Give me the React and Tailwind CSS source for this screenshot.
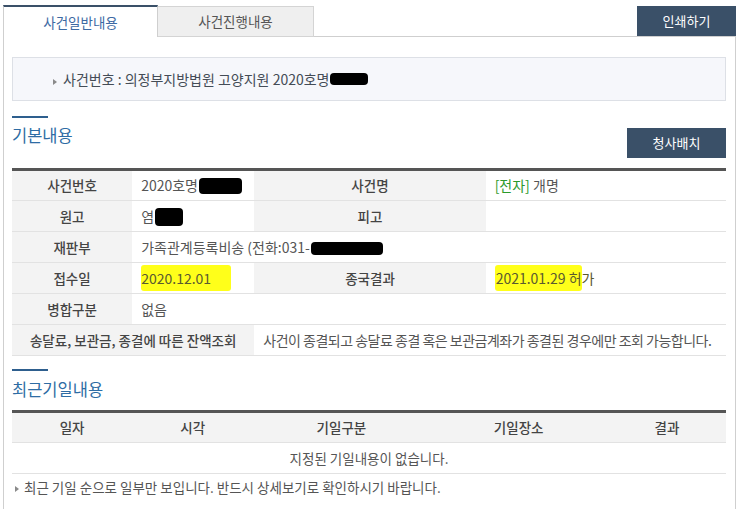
import React from "react";

const font = { fontFamily: '"Noto Sans CJK KR", "Noto Sans", sans-serif' };

function Blob({ className }) {
  return <span className={"inline-block bg-black rounded-[4px] align-middle " + className} />;
}

function Bullet({ className = "" }) {
  return (
    <svg width="4" height="6" viewBox="0 0 4 6" className={"inline-block " + className}>
      <path d="M0 0 L4 3 L0 6 Z" fill="#8a8a8a" />
    </svg>
  );
}

const th = "bg-[#f3f3f3] text-[#444] font-medium text-[13.5px] text-center border-b border-[#e2e2e2] h-[31px] p-0";
const td = "bg-white text-[#555] text-[14px] text-left pl-[9px] border-b border-[#e2e2e2] h-[31px] p-0";

export default function App() {
  return (
    <div className="w-[743px] h-[509px] bg-white overflow-hidden pl-[3px] pt-[5px] text-[13px]" style={font}>
      <div className="w-[733px]">
        {/* tabs row */}
        <div className="flex items-end h-[32px]">
          <div className="w-[155px] h-[32px] border-t-2 border-[#3a5068] border-l border-r border-l-[#cfcfcf] border-r-[#cfcfcf] bg-white flex items-center justify-center text-[#3d6aa3] text-[13.5px]">
            사건일반내용
          </div>
          <div className="w-[156px] h-[31px] bg-[#efefef] border-t border-r border-b border-[#d4d4d4] flex items-center justify-center text-[#555] text-[13.5px]">
            사건진행내용
          </div>
          <div className="flex-1 h-[32px] border-b border-[#cfcfcf] flex justify-end items-start">
            <div className="w-[99px] h-[30px] mt-[1px] bg-[#3a5068] text-white flex items-center justify-center text-[13px]">
              인쇄하기
            </div>
          </div>
        </div>

        {/* container */}
        <div className="border-l border-r border-[#cfcfcf] h-[480px] pl-[8px] pr-[9px] pt-[20px]">
          {/* case number box */}
          <div className="h-[44px] bg-[#f6f7fb] border border-[#dde0e6] flex items-center pl-[40px] text-[#444c56] text-[14px]">
            <Bullet className="mr-[6px] mt-[5px]" />
            <span>사건번호 : 의정부지방법원 고양지원 2020호명</span>
            <Blob className="w-[38px] h-[12px] ml-[1px]" />
          </div>

          {/* 기본내용 heading */}
          <div className="flex items-start justify-between mt-[15px] h-[42px]">
            <div>
              <div className="w-[36px] h-[2px] bg-[#2e5f8e]" />
              <div className="text-[16.5px] text-[#2e6ca4] mt-[5px] leading-[24px]">기본내용</div>
            </div>
            <div className="w-[99px] h-[30px] mt-[12px] bg-[#3a5068] text-white flex items-center justify-center text-[13px]">
              청사배치
            </div>
          </div>

          <table className="w-full border-collapse table-fixed mt-[10px] border-t-[3px] border-[#555]">
            <colgroup>
              <col style={{ width: 120 }} />
              <col style={{ width: 122 }} />
              <col style={{ width: 231 }} />
              <col style={{ width: 240 }} />
            </colgroup>
            <tbody>
              <tr>
                <th className={th}>사건번호</th>
                <td className={td}>
                  2020호명<Blob className="w-[43px] h-[16px] ml-[1px] mt-[-2px]" />
                </td>
                <th className={th}>사건명</th>
                <td className={td}>
                  <span className="text-[#2b9a2b]">[전자]</span> 개명
                </td>
              </tr>
              <tr>
                <th className={th}>원고</th>
                <td className={td}>
                  염<Blob className="w-[28px] h-[18px] ml-[1px] mt-[-2px]" />
                </td>
                <th className={th}>피고</th>
                <td className={td}></td>
              </tr>
              <tr>
                <th className={th}>재판부</th>
                <td className={td} colSpan={3}>
                  가족관계등록비송 (전화:031-<Blob className="w-[72px] h-[13px] ml-[1px]" />
                </td>
              </tr>
              <tr>
                <th className={th}>접수일</th>
                <td className={td}>
                  <span className="bg-[#ffff1a] rounded-[3px] pr-[20px] py-[3px] text-[#5a5a30]">2020.12.01</span>
                </td>
                <th className={th}>종국결과</th>
                <td className={td}>
                  <span className="bg-[#ffff1a] rounded-[3px] pl-[1px] py-[3px] text-[#5a5a30]">2021.01.29 허</span>
                  <span className="text-[#5a5a30]">가</span>
                </td>
              </tr>
              <tr>
                <th className={th}>병합구분</th>
                <td className={td} colSpan={3}>
                  없음
                </td>
              </tr>
              <tr>
                <th className={th} colSpan={2}>
                  송달료, 보관금, 종결에 따른 잔액조회
                </th>
                <td className={td + " pl-[5px] tracking-[-0.5px]"} colSpan={2}>
                  사건이 종결되고 송달료 종결 혹은 보관금계좌가 종결된 경우에만 조회 가능합니다.
                </td>
              </tr>
            </tbody>
          </table>

          {/* 최근기일내용 heading */}
          <div className="mt-[13px]">
            <div className="w-[36px] h-[2px] bg-[#2e5f8e]" />
            <div className="text-[16.5px] text-[#2e6ca4] mt-[6px] leading-[24px]">최근기일내용</div>
          </div>

          <table className="w-full border-collapse table-fixed mt-[9px] border-t-[3px] border-[#555]">
            <colgroup>
              <col style={{ width: 120 }} />
              <col style={{ width: 121 }} />
              <col style={{ width: 176 }} />
              <col style={{ width: 178 }} />
              <col style={{ width: 118 }} />
            </colgroup>
            <thead>
              <tr>
                <th className={th + " h-[30px]"}>일자</th>
                <th className={th + " h-[30px]"}>시각</th>
                <th className={th + " h-[30px]"}>기일구분</th>
                <th className={th + " h-[30px]"}>기일장소</th>
                <th className={th + " h-[30px]"}>결과</th>
              </tr>
            </thead>
            <tbody>
              <tr>
                <td colSpan={5} className="text-center text-[#555] text-[13.5px] border-b border-[#e2e2e2] h-[31px] p-0">
                  지정된 기일내용이 없습니다.
                </td>
              </tr>
            </tbody>
          </table>

          <div className="flex items-center h-[26px] text-[#555] text-[13.5px] pl-[3px]">
            <Bullet className="mr-[5px] mt-[4px]" />
            <span>최근 기일 순으로 일부만 보입니다. 반드시 상세보기로 확인하시기 바랍니다.</span>
          </div>
        </div>
      </div>
    </div>
  );
}
